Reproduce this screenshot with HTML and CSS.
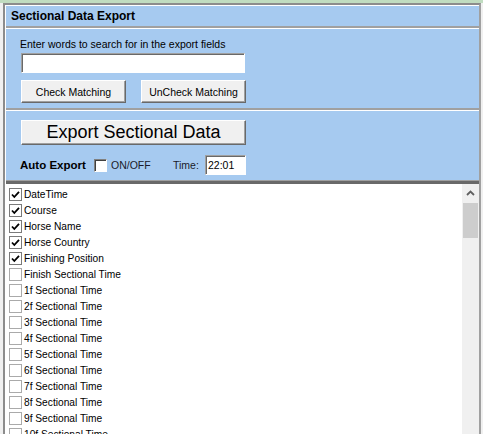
FILE: index.html
```html
<!DOCTYPE html>
<html>
<head>
<meta charset="utf-8">
<link rel="stylesheet" href="styles.css">
</head>
<body>
<div class="top-strip"></div>
<div class="window">
  <div class="inner">
    <div class="header">Sectional Data Export</div>
    <div class="panel search">
      <div class="label">Enter words to search for in the export fields</div>
      <div class="textbox"></div>
      <div class="btn-row">
        <div class="btn btn-small">Check Matching</div>
        <div class="btn btn-small">UnCheck Matching</div>
      </div>
    </div>
    <div class="panel export">
      <div class="btn btn-big">Export Sectional Data</div>
      <div class="auto-row">
        <span class="auto-label">Auto Export</span>
        <span class="cb3d"></span>
        <span class="onoff">ON/OFF</span>
        <span class="time-label">Time:</span>
        <span class="time-box">22:01</span>
      </div>
    </div>
    <div class="list-wrap">
      <div class="list">
        <div class="row"><span class="cb checked"><svg viewBox="0 0 11 11" width="11" height="11"><polyline points="2,5.5 4.3,8 9,2.8" fill="none" stroke="#000" stroke-width="1.8"/></svg></span><span class="txt">DateTime</span></div>
        <div class="row"><span class="cb checked"><svg viewBox="0 0 11 11" width="11" height="11"><polyline points="2,5.5 4.3,8 9,2.8" fill="none" stroke="#000" stroke-width="1.8"/></svg></span><span class="txt">Course</span></div>
        <div class="row"><span class="cb checked"><svg viewBox="0 0 11 11" width="11" height="11"><polyline points="2,5.5 4.3,8 9,2.8" fill="none" stroke="#000" stroke-width="1.8"/></svg></span><span class="txt">Horse Name</span></div>
        <div class="row"><span class="cb checked"><svg viewBox="0 0 11 11" width="11" height="11"><polyline points="2,5.5 4.3,8 9,2.8" fill="none" stroke="#000" stroke-width="1.8"/></svg></span><span class="txt">Horse Country</span></div>
        <div class="row"><span class="cb checked"><svg viewBox="0 0 11 11" width="11" height="11"><polyline points="2,5.5 4.3,8 9,2.8" fill="none" stroke="#000" stroke-width="1.8"/></svg></span><span class="txt">Finishing Position</span></div>
        <div class="row"><span class="cb"></span><span class="txt">Finish Sectional Time</span></div>
        <div class="row"><span class="cb"></span><span class="txt">1f Sectional Time</span></div>
        <div class="row"><span class="cb"></span><span class="txt">2f Sectional Time</span></div>
        <div class="row"><span class="cb"></span><span class="txt">3f Sectional Time</span></div>
        <div class="row"><span class="cb"></span><span class="txt">4f Sectional Time</span></div>
        <div class="row"><span class="cb"></span><span class="txt">5f Sectional Time</span></div>
        <div class="row"><span class="cb"></span><span class="txt">6f Sectional Time</span></div>
        <div class="row"><span class="cb"></span><span class="txt">7f Sectional Time</span></div>
        <div class="row"><span class="cb"></span><span class="txt">8f Sectional Time</span></div>
        <div class="row"><span class="cb"></span><span class="txt">9f Sectional Time</span></div>
        <div class="row"><span class="cb"></span><span class="txt">10f Sectional Time</span></div>
        <div class="row"><span class="cb"></span><span class="txt">11f Sectional Time</span></div>
      </div>
      <div class="scrollbar">
        <div class="arrow"><svg viewBox="0 0 9 6" width="9" height="6"><polyline points="1,5 4.5,1.5 8,5" fill="none" stroke="#606060" stroke-width="1.8"/></svg></div>
        <div class="thumb"></div>
      </div>
    </div>
  </div>
</div>
</body>
</html>
```

FILE: styles.css
```css
* { box-sizing: border-box; }
html, body { margin: 0; padding: 0; }
body {
  width: 483px;
  height: 434px;
  overflow: hidden;
  background: #f0f0f0;
  font-family: "Liberation Sans", Arial, sans-serif;
  font-size: 10.5px;
  color: #000;
}
.top-strip {
  height: 3px;
  background: #c0dcc0;
}
.window {
  height: 431px;
  margin: 0 2px 0 3px;
  border-left: 2px solid #8c8c8c;
  border-top: 2px solid #8c8c8c;
  border-right: 2px solid #a0a0a0;
  display: flex;
  flex-direction: column;
}
.inner {
  flex: 1;
  min-height: 0;
  display: flex;
  flex-direction: column;
  border-left: 1px solid #fff;
  border-top: 1px solid #fff;
  background: #a6caf0;
}
.header {
  height: 22px;
  line-height: 20px;
  padding-left: 5px;
  font-weight: bold;
  font-size: 12px;
  border-bottom: 2px solid #a0a0a0;
}
.panel {
  border-top: 1px solid #fff;
  padding-left: 15px;
  padding-top: 9px;
}
.search {
  height: 82px;
  border-bottom: 2px solid #a0a0a0;
}
.label {
  line-height: 13px;
  margin-left: -1px;
}
.textbox {
  margin-top: 2px;
  width: 224px;
  height: 20px;
  background: #fff;
  border: 1px solid;
  border-color: #a0a0a0 #fff #fff #a0a0a0;
  box-shadow: inset 1px 1px 0 #696969;
}
.btn-row {
  margin-top: 7px;
  display: flex;
  gap: 15px;
}
.btn {
  background: #f0f0f0;
  border: 1px solid;
  border-color: #fff #696969 #696969 #fff;
  box-shadow: inset -1px -1px 0 #a0a0a0;
  display: flex;
  align-items: center;
  justify-content: center;
}
.btn-small {
  width: 105px;
  height: 23px;
}
.export {
  height: 71px;
  border-bottom: 1px solid #a0a0a0;
}
.btn-big {
  width: 225px;
  height: 25px;
  font-size: 18px;
}
.auto-row {
  margin-top: 10px;
  height: 20px;
  display: flex;
  align-items: center;
}
.auto-label {
  width: 74px;
  margin-left: -1px;
  font-weight: bold;
  font-size: 11.5px;
}
.cb3d {
  width: 13px;
  height: 13px;
  background: #fff;
  border: 1px solid;
  border-color: #808080 #fff #fff #808080;
  box-shadow: inset 1px 1px 0 #404040;
}
.onoff {
  margin-left: 4px;
  width: 62px;
  color: #1a1a2a;
}
.time-label {
  width: 32px;
  color: #1a1a2a;
}
.time-box {
  width: 41px;
  height: 20px;
  background: #fff;
  border: 1px solid;
  border-color: #a0a0a0 #fff #fff #a0a0a0;
  box-shadow: inset 1px 1px 0 #696969;
  padding-left: 2px;
  line-height: 18px;
}
.list-wrap {
  flex: 1;
  min-height: 0;
  display: flex;
  border-top: 3px solid #696969;
  overflow: hidden;
}
.list {
  flex: 1;
  background: #fff;
  padding-top: 2px;
  padding-left: 3px;
  overflow: hidden;
}
.row {
  height: 16px;
  display: flex;
  align-items: center;
  font-size: 10.2px;
}
.cb {
  width: 13px;
  height: 13px;
  border: 1px solid #aaaaaa;
  background: #fff;
  display: flex;
  align-items: center;
  justify-content: center;
}
.cb.checked {
  border-color: #7a7a7a;
}
.txt {
  margin-left: 2px;
}
.scrollbar {
  width: 17px;
  background: #f0f0f0;
  display: flex;
  flex-direction: column;
}
.arrow {
  height: 17px;
  display: flex;
  align-items: center;
  justify-content: center;
}
.thumb {
  margin: 2px 0 0 1px;
  width: 15px;
  height: 35px;
  background: #cdcdcd;
}
```
